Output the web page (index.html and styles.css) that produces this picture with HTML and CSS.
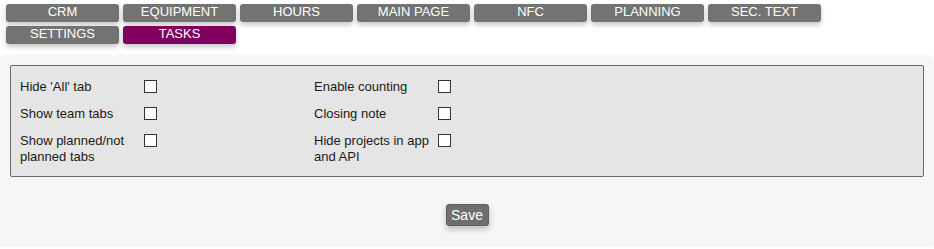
FILE: index.html
```html
<!DOCTYPE html>
<html lang="en">
<head>
    <meta charset="UTF-8">
    <meta name="viewport" content="width=device-width, initial-scale=1.0">
    <title>Settings - Tasks</title>
    <link rel="stylesheet" href="styles.css">
</head>
<body>
    <div class="tabs"> <!--tab row, wraps onto two lines-->
        <a class="tab">CRM</a>
        <a class="tab">EQUIPMENT</a>
        <a class="tab">HOURS</a>
        <a class="tab">MAIN PAGE</a>
        <a class="tab">NFC</a>
        <a class="tab">PLANNING</a>
        <a class="tab">SEC. TEXT</a>
        <a class="tab">SETTINGS</a>
        <a class="tab active">TASKS</a>
    </div>
    <form class="panel" name="frmTasks">
        <fieldset class="options">
            <div class="opt">
                <label for="chkHideAll">Hide 'All' tab</label>
                <input type="checkbox" id="chkHideAll" class="check">
            </div>
            <div class="opt">
                <label for="chkCounting">Enable counting</label>
                <input type="checkbox" id="chkCounting" class="check">
            </div>
            <div class="opt">
                <label for="chkTeamTabs">Show team tabs</label>
                <input type="checkbox" id="chkTeamTabs" class="check">
            </div>
            <div class="opt">
                <label for="chkClosingNote">Closing note</label>
                <input type="checkbox" id="chkClosingNote" class="check">
            </div>
            <div class="opt">
                <label for="chkPlanned">Show planned/not planned tabs</label>
                <input type="checkbox" id="chkPlanned" class="check">
            </div>
            <div class="opt">
                <label for="chkHideProjects">Hide projects in app and API</label>
                <input type="checkbox" id="chkHideProjects" class="check">
            </div>
        </fieldset>
        <div class="actions">
            <input type="button" value="Save" class="button">
        </div>
    </form>
</body>
</html>
```

FILE: styles.css
```css
body {
    margin: 0;
    background-color: white;
    font-family: "Liberation Sans", Arial, sans-serif;
    font-size: 13px;
    color: #222;
}
.tabs {
    display: flex;
    flex-wrap: wrap;
    gap: 4px;
    padding: 4px 6px 0 6px;
    width: 815px;
}
.tab {
    width: 113px;
    height: 18px;
    line-height: 16px;
    text-align: center;
    color: white;
    background-color: #737373;
    border-radius: 3px;
    box-shadow: 0 3px 5px rgba(0, 0, 0, 0.22);
    cursor: pointer;
}
.tab.active {background-color: #80005f;}

.panel {
    margin: 12px 2px 0 2px;
    height: 191px;
    box-sizing: border-box;
    padding: 9px 8px 0 8px;
    background-color: #f6f6f6;
    border-radius: 4px;
    box-shadow: 0 1px 4px rgba(0, 0, 0, 0.12);
}
fieldset.options {
    margin: 0;
    padding: 13px 9px 11px 9px;
    border: 1px solid #6a6a6a;
    border-radius: 2px;
    background-color: #e5e5e5;
    display: grid;
    grid-template-columns: 294px 294px;
    row-gap: 11px;
}
.opt {
    display: flex;
    align-items: flex-start;
    line-height: 16px;
    color: #1a1a1a;
}
.opt label {width: 124px;}
input.check {
    appearance: none;
    -webkit-appearance: none;
    width: 13px;
    height: 13px;
    margin: 1px 0 0 0;
    box-sizing: border-box;
    border: 1px solid #333;
    background-color: white;
}
.actions {
    display: flex;
    justify-content: center;
    padding-top: 27px;
}
input.button {
    font-family: "Liberation Sans", Arial, sans-serif;
    font-size: 14px;
    color: white;
    background-color: #6f6f6f;
    border: 1px solid #5e5e5e;
    border-radius: 3px;
    width: 43px;
    height: 22px;
    padding: 0;
    box-shadow: 0 3px 6px rgba(0, 0, 0, 0.25);
}
```
